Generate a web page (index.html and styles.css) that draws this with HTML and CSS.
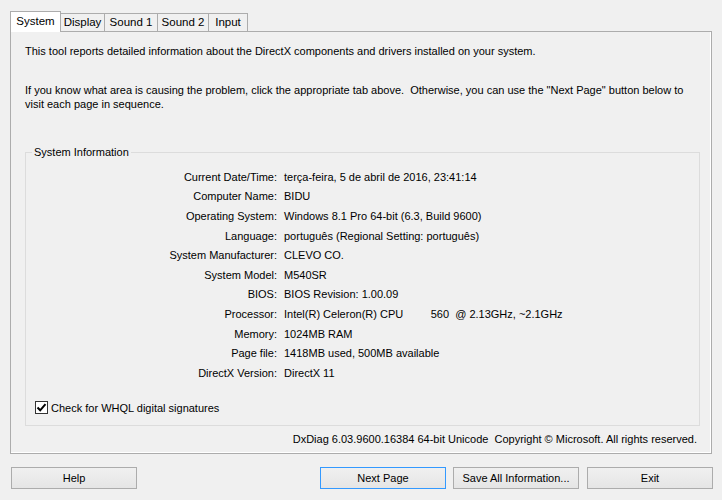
FILE: index.html
```html
<!DOCTYPE html>
<html>
<head>
<meta charset="utf-8">
<link rel="stylesheet" href="styles.css">
</head>
<body>
<div class="dialog">
  <div class="tabs">
    <div class="tab tab-system active">System</div>
    <div class="tab tab-display">Display</div>
    <div class="tab tab-sound1">Sound 1</div>
    <div class="tab tab-sound2">Sound 2</div>
    <div class="tab tab-input">Input</div>
  </div>
  <div class="panel">
    <p class="intro">This tool reports detailed information about the DirectX components and drivers installed on your system.</p>
    <p class="intro intro-2">If you know what area is causing the problem, click the appropriate tab above.&nbsp; Otherwise, you can use the "Next Page" button below to visit each page in sequence.</p>
    <fieldset class="group">
      <legend class="group-title">System Information</legend>
      <div class="rows">
        <div class="label">Current Date/Time:</div><div class="value">terça-feira, 5 de abril de 2016, 23:41:14</div>
        <div class="label">Computer Name:</div><div class="value">BIDU</div>
        <div class="label">Operating System:</div><div class="value">Windows 8.1 Pro 64-bit (6.3, Build 9600)</div>
        <div class="label">Language:</div><div class="value">português (Regional Setting: português)</div>
        <div class="label">System Manufacturer:</div><div class="value">CLEVO CO.</div>
        <div class="label">System Model:</div><div class="value">M540SR</div>
        <div class="label">BIOS:</div><div class="value">BIOS Revision: 1.00.09</div>
        <div class="label">Processor:</div><div class="value">Intel(R) Celeron(R) CPU         560  @ 2.13GHz, ~2.1GHz</div>
        <div class="label">Memory:</div><div class="value">1024MB RAM</div>
        <div class="label">Page file:</div><div class="value">1418MB used, 500MB available</div>
        <div class="label">DirectX Version:</div><div class="value">DirectX 11</div>
      </div>
      <label class="check">
        <span class="check-box"><svg width="11" height="11" viewBox="0 0 11 11"><path d="M1.5 5.5 L4.2 8.3 L9.5 2.2" fill="none" stroke="#000" stroke-width="2"/></svg></span>
        <span class="check-text">Check for WHQL digital signatures</span>
      </label>
    </fieldset>
    <div class="footer">DxDiag 6.03.9600.16384 64-bit Unicode&nbsp; Copyright © Microsoft. All rights reserved.</div>
  </div>
  <div class="buttons">
    <button class="btn btn-help">Help</button>
    <button class="btn btn-next">Next Page</button>
    <button class="btn btn-save">Save All Information...</button>
    <button class="btn btn-exit">Exit</button>
  </div>
</div>
</body>
</html>
```
FILE: styles.css
```css
html, body {
  margin: 0;
  padding: 0;
  background: #f0f0f0;
}
body {
  font-family: "Liberation Sans", Arial, sans-serif;
  font-size: 11px;
  color: #000;
}
.dialog {
  width: 722px;
  height: 500px;
  padding-top: 11px;
  box-sizing: border-box;
}
.tabs {
  display: flex;
  align-items: flex-end;
  height: 20px;
  padding-left: 10px;
  position: relative;
  z-index: 2;
}
.tab {
  box-sizing: border-box;
  height: 18px;
  border: 1px solid #acacac;
  border-bottom: none;
  background: #f0f0f0;
  line-height: 17px;
  text-align: center;
  margin-left: -1px;
  font-size: 11.5px;
}
.tab.active {
  height: 21px;
  margin-bottom: -1px;
  background: #fff;
  margin-left: 0;
  line-height: 19px;
  position: relative;
  z-index: 3;
}
.tab-system { width: 51px; }
.tab-display { width: 45px; }
.tab-sound1 { width: 54px; }
.tab-sound2 { width: 52px; }
.tab-input { width: 40px; }
.panel {
  margin-left: 10px;
  width: 702px;
  height: 423px;
  box-sizing: border-box;
  border: 1px solid #acacac;
  box-shadow: inset -1px -1px 0 #fff;
  padding: 0 14px;
  position: relative;
  z-index: 1;
}
.intro {
  margin: 12px 0 0;
  line-height: 14px;
}
.intro-2 {
  margin-top: 26px;
  line-height: 13.5px;
  width: 670px;
}
.group {
  margin: 34px 0 0 0;
  padding: 0 0 10px 0;
  border: 1px solid #dcdcdc;
  width: 675px;
  box-sizing: border-box;
  min-width: 0;
}
.group-title {
  margin-left: 6px;
  padding: 0 2px;
  line-height: 14px;
}
.rows {
  display: grid;
  grid-template-columns: 251px 1fr;
  column-gap: 7px;
  margin-top: 8px;
  grid-auto-rows: 19.6px;
  align-items: center;
}
.label {
  text-align: right;
  white-space: nowrap;
}
.value {
  white-space: pre;
}
.check {
  display: flex;
  align-items: center;
  margin: 18px 0 0 9px;
  height: 14px;
}
.check-box {
  width: 13px;
  height: 13px;
  box-sizing: border-box;
  border: 1px solid #333;
  background: #fff;
  display: flex;
  align-items: center;
  justify-content: center;
  margin-right: 3px;
}
.check-box svg { display: block; }
.footer {
  margin-top: 6px;
  line-height: 14px;
  text-align: right;
}
.buttons {
  display: flex;
  margin-top: 13px;
  padding-left: 11px;
}
.btn {
  box-sizing: border-box;
  width: 126px;
  height: 22px;
  border: 1px solid #acacac;
  background: linear-gradient(#f0f0f0, #e5e5e5);
  font-family: "Liberation Sans", Arial, sans-serif;
  font-size: 11px;
  color: #000;
  padding: 0;
  margin: 0;
}
.btn-next {
  margin-left: 183px;
  border-color: #3399ff;
}
.btn-save { margin-left: 7px; }
.btn-exit { margin-left: 8px; }
```
